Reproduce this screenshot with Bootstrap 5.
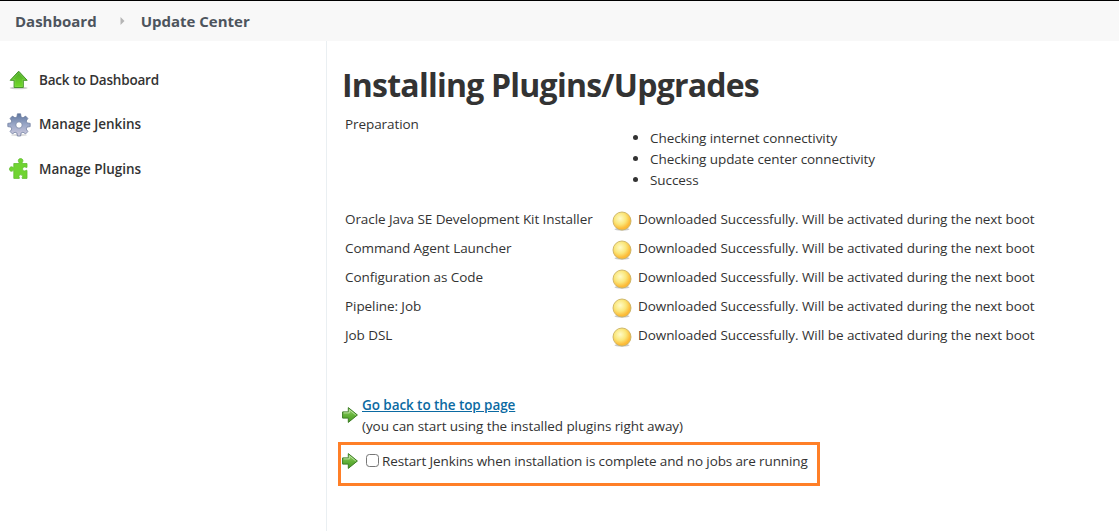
<!DOCTYPE html>
<html lang="en">
<head>
<meta charset="utf-8">
<meta name="viewport" content="width=device-width, initial-scale=1">
<title>Update Center [Jenkins]</title>
<link href="https://cdn.jsdelivr.net/npm/bootstrap@5.3.0/dist/css/bootstrap.min.css" rel="stylesheet">
<style>
  body{font-family:"Segoe UI","Open Sans","Noto Sans",sans-serif;font-size:13.5px;line-height:21px;letter-spacing:-.075px;color:#333;background:#fff;overflow:hidden}
  .crumbs{height:41px;background:#f8f8f8;border-top:1px solid #000;font-size:15px;font-weight:700;letter-spacing:0;color:#4d545d;padding-left:15px}
  .crumbs .sep{margin:0 16px 0 23px}
  .side{width:327px;border-right:1px solid #eaeff2;padding:28px 0 0 7px;font-weight:600;letter-spacing:-.03px}
  .side a{color:#333;height:23px;gap:8px;margin-bottom:21.3px}
  .side a:first-child{letter-spacing:-.2px}
  .page{height:calc(100vh - 41px)}
  .main-area{padding-left:11px}
  h1{font-size:32px;font-weight:700;line-height:38px;letter-spacing:-.77px;margin:25px 0 10px 4px;color:#333;white-space:nowrap}
  .jobs{padding-left:7px}
  .job-name{width:267px}
  .job-row{height:29px}
  .job-row svg{margin:1.5px 6px 0 0}
  .prep{height:83px}
  .prep ul{margin:13px 0 0;padding-left:38px}
  .prep li{height:21px}
  .prep li::marker{font-size:14px}
  .after{padding:41px 0 0 4px;gap:4px}
  .after svg{margin-top:-2px}
  .after a{color:#0b6aa2;font-weight:600}
  .boxed{width:482px;height:44px;border:3px solid #ff7f27;padding:6px 0 0 1px;margin-top:5px}
  .boxed svg{margin-top:-2px}
  .boxed label{letter-spacing:-.12px}
  .boxed input{width:13px;height:13px;margin:-3px 3px 0 8px;border:1px solid #767676;border-radius:2.5px}
</style>
</head>
<body>
<svg width="0" height="0" class="position-absolute" aria-hidden="true">
  <defs>
    <radialGradient id="gold" cx=".4" cy=".36" r=".66"><stop offset="0" stop-color="#fffbc8"/><stop offset=".5" stop-color="#fae679"/><stop offset=".85" stop-color="#fdbb38"/><stop offset="1" stop-color="#fbb934"/></radialGradient>
    <linearGradient id="green" x2="0" y2="1"><stop offset="0" stop-color="#4ea72a"/><stop offset="1" stop-color="#73dc29"/></linearGradient>
    <linearGradient id="leaf" x2="0" y2="1"><stop offset="0" stop-color="#a5d67d"/><stop offset=".5" stop-color="#66b43c"/><stop offset="1" stop-color="#459a20"/></linearGradient>
    <linearGradient id="steel" x2="0" y2="1"><stop offset="0" stop-color="#5f779f"/><stop offset=".5" stop-color="#9ba8c8"/><stop offset="1" stop-color="#d0cbde"/></linearGradient>
    <symbol id="ball" viewBox="0 0 20 21"><ellipse cx="10" cy="18.300" rx="7.500" ry="1.500" fill="#777" opacity=".4"/><circle cx="10" cy="10" r="9" fill="url(#gold)" stroke="#c9b264" stroke-width=".9"/></symbol>
    <symbol id="go" viewBox="0 0 16 16"><path d="M.6 4.900H6.300V.6L15.400 8l-9.100 7.400v-4.300H.6z" fill="url(#leaf)" stroke="#3c7c24" stroke-width="1" stroke-linejoin="round"/><path d="M1.600 5.900h5.700V2.800L13.800 8" fill="none" stroke="#c7e8ae" stroke-width=".8"/></symbol>
  </defs>
</svg>

<nav class="crumbs d-flex align-items-center">
  <span>Dashboard</span>
  <svg class="sep" width="5" height="8" viewBox="0 0 5 8"><path d="M.5 0 4.500 4 .5 8z" fill="#b5b5b5"/></svg>
  <span>Update Center</span>
</nav>

<div class="page d-flex">
  <aside class="side flex-shrink-0">
    <a href="#" class="d-flex align-items-center text-decoration-none">
      <svg width="24" height="24" viewBox="0 0 24 24"><ellipse cx="11.700" cy="19" rx="9" ry="1.300" fill="#888" opacity=".4"/><path d="M11.700 2.200 3.200 11.300h3.900v7.200h9.200v-7.200h3.900z" fill="url(#green)" stroke="#46962a" stroke-width="1" stroke-linejoin="round"/><path d="M11.700 3.700 5.500 10.400h2.500v7.100h7.400v-7.100h2.500z" fill="none" stroke="#8bdc62" stroke-width=".6" opacity=".7"/></svg>
      <span>Back to Dashboard</span></a>
    <a href="#" class="d-flex align-items-center text-decoration-none">
      <svg width="24" height="24" viewBox="0 0 24 24"><ellipse cx="12" cy="22" rx="8" ry="1.200" fill="#999" opacity=".35"/><path fill="url(#steel)" stroke="#66759a" stroke-width=".7" stroke-linejoin="round" fill-rule="evenodd" d="M10.400 .8h3.200l.5 3.200 1.900.8 2.600-1.700 2.300 2.300L19.200 8l.8 1.900 3.200.5v3.200l-3.200.5-.8 1.900 1.700 2.600-2.300 2.300L16 19.200l-1.900.8-.5 3h-3.200l-.5-3L8 19.200l-2.600 1.700-2.300-2.300L4.800 16 4 14.100l-3.200-.5v-3.200L4 9.900 4.800 8 3.100 5.400l2.300-2.300L8 4.800l1.900-.8zM12 8.800a3.200 3.200 0 1 0 0 6.400 3.200 3.200 0 1 0 0-6.400z"/></svg>
      <span>Manage Jenkins</span></a>
    <a href="#" class="d-flex align-items-center text-decoration-none">
      <svg width="24" height="24" viewBox="0 0 24 24"><path d="M6.800 6.500h5.300c.5-.9-.8-1.400-.8-2.800 0-2.900 4.600-2.900 4.600 0 0 1.400-1.200 1.900-.8 2.800h4.900v3.900c-.7.500-1.400-.5-2.500-.5-2.500 0-2.500 4 0 4 1.100 0 1.800-1 2.500-.5v8h-4.800c-.6-.7.400-1.200.4-2.200 0-1.900-3.700-1.900-3.700 0 0 1 1 1.500.4 2.200H6.800v-7.600c-.7-.6-1.300.5-2.300.5-2.700 0-2.700-4.500 0-4.500 1 0 1.600 1.100 2.300.5z" fill="#70d431" stroke="#62bd31" stroke-width=".8"/></svg>
      <span>Manage Plugins</span></a>
  </aside>

  <main class="main-area flex-grow-1">
    <h1>Installing Plugins/Upgrades</h1>
    <div class="jobs">
      <div class="prep d-flex">
        <div class="job-name">Preparation</div>
        <ul>
          <li>Checking internet connectivity</li>
          <li>Checking update center connectivity</li>
          <li>Success</li>
        </ul>
      </div>
      <div class="pt-2 mt-1">
        <div class="job-row d-flex"><div class="job-name">Oracle Java SE Development Kit Installer</div><svg width="20" height="21"><use href="#ball"/></svg><span>Downloaded Successfully. Will be activated during the next boot</span></div>
        <div class="job-row d-flex"><div class="job-name">Command Agent Launcher</div><svg width="20" height="21"><use href="#ball"/></svg><span>Downloaded Successfully. Will be activated during the next boot</span></div>
        <div class="job-row d-flex"><div class="job-name">Configuration as Code</div><svg width="20" height="21"><use href="#ball"/></svg><span>Downloaded Successfully. Will be activated during the next boot</span></div>
        <div class="job-row d-flex"><div class="job-name">Pipeline: Job</div><svg width="20" height="21"><use href="#ball"/></svg><span>Downloaded Successfully. Will be activated during the next boot</span></div>
        <div class="job-row d-flex"><div class="job-name">Job DSL</div><svg width="20" height="21"><use href="#ball"/></svg><span>Downloaded Successfully. Will be activated during the next boot</span></div>
      </div>
    </div>
    <div class="after d-flex align-items-center">
      <svg width="16" height="16"><use href="#go"/></svg>
      <div><a href="#">Go back to the top page</a><br><span>(you can start using the installed plugins right away)</span></div>
    </div>
    <div class="boxed d-flex align-items-start">
      <div class="d-flex align-items-center">
        <svg width="16" height="16"><use href="#go"/></svg>
        <input class="form-check-input" type="checkbox" id="restart">
        <label for="restart">Restart Jenkins when installation is complete and no jobs are running</label>
      </div>
    </div>
  </main>
</div>
<script src="https://cdn.jsdelivr.net/npm/bootstrap@5.3.0/dist/js/bootstrap.bundle.min.js"></script>
</body>
</html>
